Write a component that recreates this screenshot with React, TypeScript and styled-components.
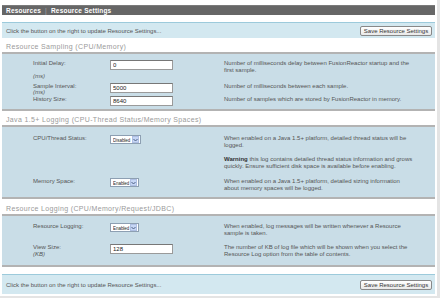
import React from "react";
import styled, { createGlobalStyle } from "styled-components";

const GlobalStyle = createGlobalStyle`
  html, body {
    margin: 0;
    padding: 0;
    background: #e4e4e4;
  }
  body {
    font-family: "Liberation Sans", Arial, sans-serif;
  }
`;

const Page = styled.div`
  width: 437px;
  height: 296px;
  box-sizing: border-box;
  padding: 5px 2px 0 2px;
  background: #fff;
  display: flex;
  flex-direction: column;
  overflow: hidden;
`;

const TitleBar = styled.div`
  height: 10px;
  background: #666;
  border-top: 1px solid #7a7a7a;
  box-sizing: border-box;
  color: #fff;
  font-weight: bold;
  font-size: 6.5px;
  line-height: 9px;
  padding-left: 4px;
  letter-spacing: 0.2px;
`;

const Sep = styled.span`
  color: #aaa;
  font-weight: normal;
  margin: 0 4px;
`;

const ActionBar = styled.div<{ $mt: number; $h: number }>`
  margin-top: ${(p) => p.$mt}px;
  height: ${(p) => p.$h}px;
  box-sizing: border-box;
  border-top: 1px solid #9ccadb;
  background: #d3e8f0;
  display: flex;
  align-items: center;
  justify-content: space-between;
  padding: 0 3px 0 4px;
  font-size: 6px;
  color: #555;
`;

const SaveButton = styled.button`
  width: 72px;
  height: 10px;
  padding: 0;
  font-family: "Liberation Sans", Arial, sans-serif;
  font-size: 6px;
  line-height: 8px;
  color: #333;
  background: linear-gradient(#ffffff, #e9e9e9);
  border: 1px solid #888;
  border-radius: 2px;
`;

const SectionHeader = styled.div<{ $h: number }>`
  height: ${(p) => p.$h}px;
  box-sizing: border-box;
  display: flex;
  align-items: flex-end;
  padding: 0 0 1px 4px;
  font-size: 7px;
  line-height: 8px;
  letter-spacing: 0.35px;
  color: #9a9a9a;
  border-bottom: 2px solid #b3b3b3;
`;

const Panel = styled.div<{ $pt: number }>`
  background: #c9dde7;
  padding-top: ${(p) => p.$pt}px;
  border-bottom: 2px solid #b3b3b3;
`;

const Row = styled.div<{ $h: number }>`
  display: grid;
  grid-template-columns: 77px 114px 190px;
  align-items: start;
  padding-left: 31px;
  height: ${(p) => p.$h}px;
`;

const Label = styled.div`
  font-size: 6px;
  line-height: 7px;
  color: #555;
`;

const Unit = styled.div<{ $gap: number }>`
  font-style: italic;
  margin-top: ${(p) => p.$gap}px;
`;

const TextInput = styled.input`
  width: 63px;
  height: 10px;
  box-sizing: border-box;
  margin: 0;
  border: 1px solid #9a9a9a;
  border-top-color: #777;
  background: #fff;
  font-family: "Liberation Sans", Arial, sans-serif;
  font-size: 6px;
  padding: 0 2px;
  color: #222;
  outline: none;
`;

const SelectBox = styled.div<{ $w: number }>`
  width: ${(p) => p.$w}px;
  height: 9px;
  box-sizing: border-box;
  border: 1px solid #8d9fb2;
  background: #fff;
  display: flex;
  align-items: center;
  padding: 0 1px 0 2px;
  font-size: 6px;
  color: #222;
  overflow: hidden;
`;

const SelectText = styled.span`
  flex: 1;
  min-width: 0;
  white-space: nowrap;
  transform: scaleX(0.74);
  transform-origin: left center;
`;

const Arrow = styled.span`
  position: relative;
  z-index: 1;
  width: 7px;
  height: 7px;
  flex: none;
  box-sizing: border-box;
  background: #c6d6f5;
  border: 1px solid #aebfe3;
  display: flex;
  align-items: center;
  justify-content: center;
`;

const Desc = styled.div`
  font-size: 6px;
  line-height: 7px;
  color: #555;
  p {
    margin: 0;
  }
  p + p {
    margin-top: 7px;
  }
  b {
    color: #333;
  }
`;

const Gap = styled.div<{ $h: number }>`
  height: ${(p) => p.$h}px;
`;

const Select: React.FC<{ value: string; w: number }> = ({ value, w }) => (
  <SelectBox $w={w}>
    <SelectText>{value}</SelectText>
    <Arrow>
      <svg width="5" height="4" viewBox="0 0 5 4">
        <path d="M0.5 1 L2.5 3 L4.5 1" stroke="#4d6185" strokeWidth="1" fill="none" />
      </svg>
    </Arrow>
  </SelectBox>
);

const Bar: React.FC<{ mt: number; h: number }> = ({ mt, h }) => (
  <ActionBar $mt={mt} $h={h}>
    <span>Click the button on the right to update Resource Settings...</span>
    <SaveButton>Save Resource Settings</SaveButton>
  </ActionBar>
);

export default function App() {
  return (
    <>
      <GlobalStyle />
      <Page>
        <TitleBar>
          Resources<Sep>|</Sep>Resource Settings
        </TitleBar>
        <Bar mt={7} h={16} />

        <SectionHeader $h={16}>Resource Sampling (CPU/Memory)</SectionHeader>
        <Panel $pt={6}>
          <Row $h={23}>
            <Label>
              Initial Delay:
              <Unit $gap={6}>(ms)</Unit>
            </Label>
            <TextInput defaultValue="0" />
            <Desc>
              <p>Number of milliseconds delay between FusionReactor startup and the first sample.</p>
            </Desc>
          </Row>
          <Row $h={13}>
            <Label>
              Sample Interval:
              <Unit $gap={-1}>(ms)</Unit>
            </Label>
            <TextInput defaultValue="5000" />
            <Desc>
              <p>Number of milliseconds between each sample.</p>
            </Desc>
          </Row>
          <Row $h={13}>
            <Label>History Size:</Label>
            <TextInput defaultValue="8640" />
            <Desc>
              <p>Number of samples which are stored by FusionReactor in memory.</p>
            </Desc>
          </Row>
        </Panel>

        <SectionHeader $h={16}>Java 1.5+ Logging (CPU-Thread Status/Memory Spaces)</SectionHeader>
        <Panel $pt={8}>
          <Row $h={43}>
            <Label>CPU/Thread Status:</Label>
            <Select value="Disabled" w={31} />
            <Desc>
              <p>When enabled on a Java 1.5+ platform, detailed thread status will be logged.</p>
              <p>
                <b>Warning</b> this log contains detailed thread status information and grows
                quickly. Ensure sufficient disk space is available before enabling.
              </p>
            </Desc>
          </Row>
          <Row $h={19}>
            <Label>Memory Space:</Label>
            <Select value="Enabled" w={29} />
            <Desc>
              <p>
                When enabled on a Java 1.5+ platform, detailed sizing information about memory
                spaces will be logged.
              </p>
            </Desc>
          </Row>
        </Panel>

        <SectionHeader $h={17}>Resource Logging (CPU/Memory/Request/JDBC)</SectionHeader>
        <Panel $pt={7}>
          <Row $h={21}>
            <Label>Resource Logging:</Label>
            <Select value="Enabled" w={29} />
            <Desc>
              <p>When enabled, log messages will be written whenever a Resource sample is taken.</p>
            </Desc>
          </Row>
          <Row $h={21}>
            <Label>
              View Size:
              <Unit $gap={0}>(KB)</Unit>
            </Label>
            <TextInput defaultValue="128" />
            <Desc>
              <p>
                The number of KB of log file which will be shown when you select the Resource Log
                option from the table of contents.
              </p>
            </Desc>
          </Row>
        </Panel>

        <Gap $h={7} />
        <Bar mt={0} h={20} />
      </Page>
    </>
  );
}
